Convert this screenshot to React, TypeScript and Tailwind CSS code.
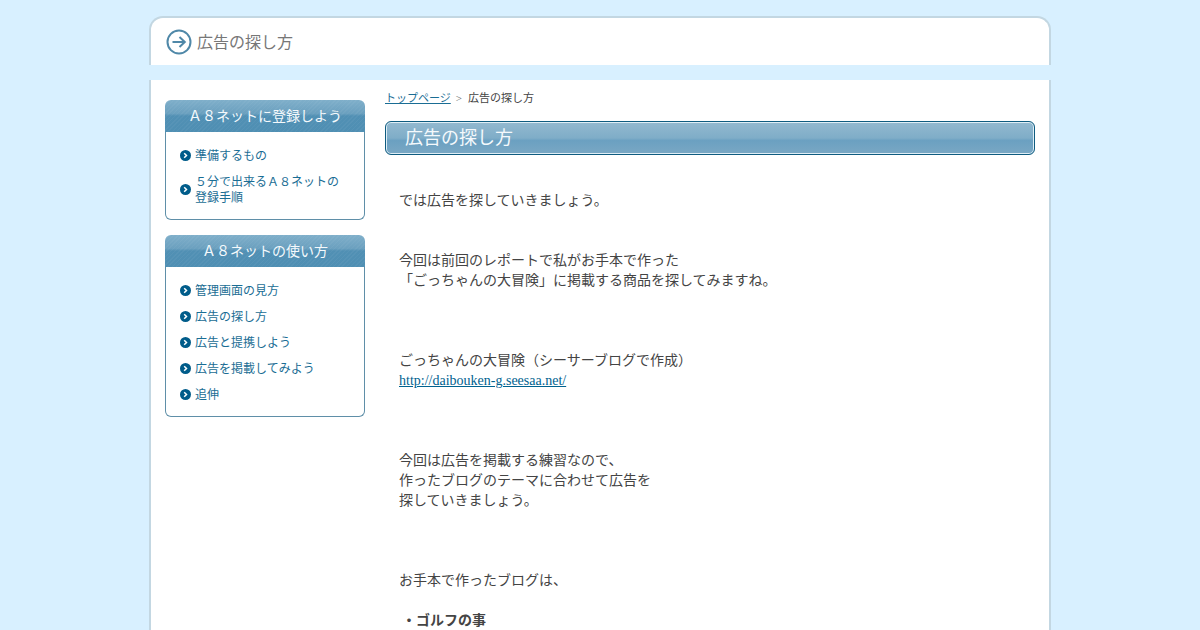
const registerLinks = ["準備するもの", "５分で出来るＡ８ネットの登録手順"];
const usageLinks = ["管理画面の見方", "広告の探し方", "広告と提携しよう", "広告を掲載してみよう", "追伸"];

function Bullet() {
  return (
    <svg width="11" height="11" viewBox="0 0 11 11" className="shrink-0">
      <circle cx="5.5" cy="5.5" r="5.5" fill="#005c8a" />
      <path d="M4.2 3.2 L6.5 5.5 L4.2 7.8" fill="none" stroke="#fff" strokeWidth="1.5" />
    </svg>
  );
}

function SideBox({ title, links }: { title: string; links: string[] }) {
  return (
    <div className="mb-[15px]">
      <div className="h-[32px] rounded-t-[6px] text-center text-[14px] leading-[34px] text-[#f4f9fc] bg-[repeating-linear-gradient(135deg,rgba(255,255,255,0.04)_0px,rgba(255,255,255,0.04)_1px,transparent_1px,transparent_3px),linear-gradient(#7fafca_0%,#6ba0bf_42%,#5190b4_50%,#4f8fb3_100%)]">
        {title}
      </div>
      <ul className="rounded-b-[6px] border border-t-0 border-[#5f8fa8] px-[14px] pt-[10px] pb-[9px]">
        {links.map((l) => (
          <li key={l} className="flex items-center gap-[4px] py-[5px] text-[12px] leading-[16px] text-[#1a6d94]">
            <Bullet />
            <a className="block pt-px -mb-px">{l}</a>
          </li>
        ))}
      </ul>
    </div>
  );
}

export default function App() {
  return (
    <div className="h-screen overflow-hidden bg-[#d8f0ff] font-['Liberation_Serif','Noto_Sans_CJK_JP',serif] text-[#444]">
      <div className="mx-auto w-[904px] pt-[16px]">
        {/* header */}
        <div className="mx-[1px] h-[49px] rounded-t-[14px] border-x-2 border-t-2 border-[#c3d7e2] bg-white flex items-center pl-[15px] gap-[5px]">
          <svg width="26" height="26" viewBox="0 0 26 26" className="shrink-0">
            <circle cx="13" cy="13" r="11.5" fill="#fff" stroke="#4f88a8" strokeWidth="2" />
            <path d="M6.5 13 H18.5 M13.5 8 L18.8 13 L13.5 18" fill="none" stroke="#4f88a8" strokeWidth="2" />
          </svg>
          <span className="pt-[2px] text-[16px] text-[#777]">広告の探し方</span>
        </div>

        <div className="h-[15px]" />

        {/* main */}
        <div className="mx-[1px] flex border-x-2 border-[#c3d7e2] bg-white pl-[14px] pr-[14px] pt-[20px] min-h-[600px]">
          <aside className="w-[200px] shrink-0">
            <SideBox title="Ａ８ネットに登録しよう" links={registerLinks} />
            <SideBox title="Ａ８ネットの使い方" links={usageLinks} />
          </aside>

          <main className="ml-[20px] w-[650px]">
            <div className="flex h-[16px] items-center text-[11px] leading-[16px] -mt-[10px] mb-[15px]">
              <a className="text-[#1a6d94] underline">トップページ</a>
              <span className="ml-[5px] mr-[6px] text-[#666]">&gt;</span>
              <span>広告の探し方</span>
            </div>
            <h2 className="h-[34px] rounded-[6px] border border-[#0f5c80] pl-[19px] text-[18px] leading-[32px] text-[#f4f9fc] shadow-[inset_0_0_0_1px_#dfeef6] bg-[linear-gradient(#93b9d0_0%,#7fadc8_50%,#6ba0c1_58%,#7aa8c4_100%)]">
              広告の探し方
            </h2>
            <div className="mt-[36px] px-[14px] text-[14px] leading-[20px]">
              <p>では広告を探していきましょう。</p>
              <p className="mt-[40px]">今回は前回のレポートで私がお手本で作った<br />「ごっちゃんの大冒険」に掲載する商品を探してみますね。</p>
              <p className="mt-[60px]">ごっちゃんの大冒険（シーサーブログで作成）<br /><a className="text-[#00628f] underline">http://daibouken-g.seesaa.net/</a></p>
              <p className="mt-[60px]">今回は広告を掲載する練習なので、<br />作ったブログのテーマに合わせて広告を<br />探していきましょう。</p>
              <p className="mt-[60px]">お手本で作ったブログは、</p>
              <p className="mt-[20px] pl-[3px] font-bold">・ゴルフの事</p>
            </div>
          </main>
        </div>
      </div>
    </div>
  );
}
